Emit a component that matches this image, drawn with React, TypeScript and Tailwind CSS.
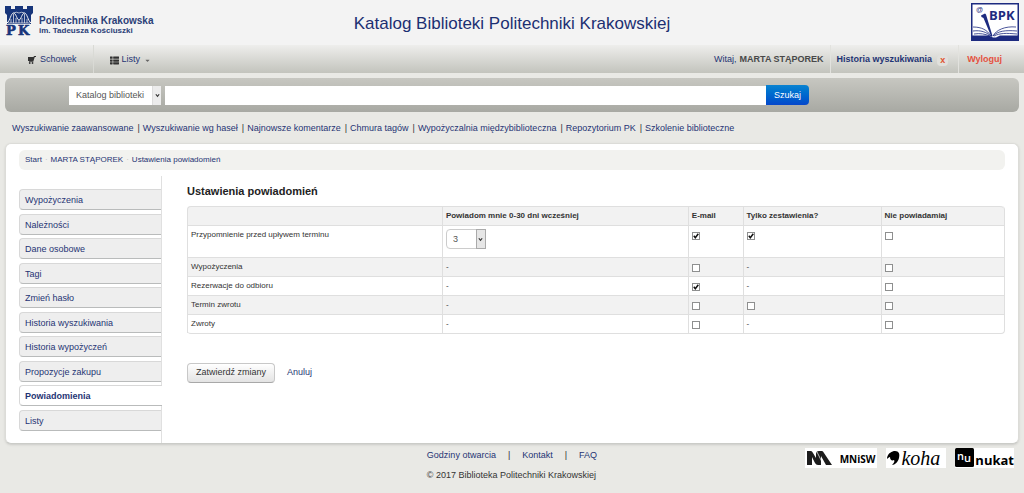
import { useState } from "react";
import { FaThList, FaCaretDown } from "react-icons/fa";

type Cell = boolean | null;

type NoticeRow = {
    name: string;
    days?: boolean;
    email: Cell;
    digest: Cell;
    none: Cell;
};

const searchLinks = [
    "Wyszukiwanie zaawansowane",
    "Wyszukiwanie wg haseł",
    "Najnowsze komentarze",
    "Chmura tagów",
    "Wypożyczalnia międzybiblioteczna",
    "Repozytorium PK",
    "Szkolenie biblioteczne",
];

const menu = [
    "Wypożyczenia",
    "Należności",
    "Dane osobowe",
    "Tagi",
    "Zmień hasło",
    "Historia wyszukiwania",
    "Historia wypożyczeń",
    "Propozycje zakupu",
    "Powiadomienia",
    "Listy",
];

// null means that the option is not available for this message
const notices: NoticeRow[] = [
    { name: "Przypomnienie przed upływem terminu", days: true, email: true, digest: true, none: false },
    { name: "Wypożyczenia", email: false, digest: null, none: false },
    { name: "Rezerwacje do odbioru", email: true, digest: null, none: false },
    { name: "Termin zwrotu", email: false, digest: false, none: false },
    { name: "Zwroty", email: false, digest: null, none: false },
];

const PkLogo = () => (
    <svg viewBox="0 0 28 30" className="h-[30px] w-7 overflow-visible" fill="#17357a" aria-hidden="true">
        <path d="M0 0h6v3h4V0h8v3h4V0h6v7l-2 2v9H2V9L0 7z" />
        <g stroke="#f3f3f3" fill="none" strokeWidth="1">
            <path d="M2 17C5 15 6 7 8.500 7S12 14 14 14s3-7 5.500-7S23 15 26 17" />
            <path d="M8.500 7q3-1.500 5.500 0 2.500-1.500 5.500 0M3 17h22M6 13v4M8.500 8v9M11 12v5M14 14v3M17 12v5M19.500 8v9M22 13v4" strokeWidth=".7" />
        </g>
        <text x="1" y="29" fontSize="13" fontWeight="700" stroke="#17357a" strokeWidth=".6" fontFamily="DejaVu Serif, serif">P</text>
        <text x="13" y="29" fontSize="13" fontWeight="700" stroke="#17357a" strokeWidth=".6" fontFamily="DejaVu Serif, serif">K</text>
    </svg>
);

const BpkLogo = () => (
    <svg viewBox="0 0 48 38" className="h-[38px] w-12" role="img" aria-label="BPK">
        <rect x=".75" y=".75" width="46.500" height="36.500" fill="#fff" stroke="#1d2b80" strokeWidth="1.500" />
        <path d="M1 32.500h17l4 2h3l4-2h18v4.500H1z" fill="#1d2b80" />
        <path d="M10 12.500l4-2 1 1 6.500 21.500-1 1-8-19-2-1z" fill="#1d2b80" />
        <g fill="none" stroke="#1d2b80" strokeWidth=".8">
            <path d="M2 24c9 0 14 3 18 9M2 28c8-1 13 1 18 5M3 31c6-1 11 0 16 2M22 33c3-6 12-10 23-9M22 33c5-5 12-6 24-5M23 33c6-3 12-3 23-2" />
        </g>
        <text x="5" y="9" fontSize="7" fill="#1d2b80" fontFamily="Liberation Sans, sans-serif">@</text>
        <text x="18" y="17" fontSize="13" fontWeight="700" fill="#1d2b80" fontFamily="Open Sans, sans-serif">BPK</text>
    </svg>
);

const CartIcon = () => (
    <svg viewBox="0 0 16 16" className="h-2 w-2" fill="#333" aria-hidden="true">
        <path d="M0 2h11l1-2h4v2h-2.500l-3 9.500H2V10H0z" />
        <circle cx="3.500" cy="14" r="1.800" />
        <circle cx="9" cy="14" r="1.800" />
    </svg>
);

const Chevron = () => (
    <svg viewBox="0 0 6 6" className="h-[5px] w-[5px]" fill="none" stroke="#333" strokeWidth="1.400" aria-hidden="true">
        <path d="M1 1.500l2 2.500 2-2.500" />
    </svg>
);

const Check = ({ label, value }: { label: string; value: Cell }) => {
    const [checked, setChecked] = useState(!!value);
    if (value === null) return <>-</>;
    return (
        <span className="grid w-2 pt-[3px]">
            <input
                type="checkbox"
                aria-label={label}
                checked={checked}
                onChange={(e) => setChecked(e.target.checked)}
                className="col-start-1 row-start-1 h-2 w-2 appearance-none border border-[#8e8f8f] bg-white"
            />
            {checked && (
                <svg viewBox="0 0 8 8" className="pointer-events-none col-start-1 row-start-1 h-2 w-2" fill="none" stroke="#111" strokeWidth="1.500" aria-hidden="true">
                    <path d="M1.800 3.800l1.500 1.900 3-4" />
                </svg>
            )}
        </span>
    );
};

const SiteHeader = () => (
    <header className="grid h-[45px] grid-cols-[1fr_auto_1fr] items-start bg-[#f3f3f3] px-[5px]">
        <a href="#" className="flex gap-[6px] pt-[6px] font-bold text-[#2b4077]">
            <PkLogo />
            <span className="pt-[9px]">
                <span className="block text-[10px] leading-[11px]">Politechnika Krakowska</span>
                <span className="block text-[8px] leading-[10px]">im. Tadeusza Kościuszki</span>
            </span>
        </a>
        <h1 className="pt-3 text-[17px] leading-6 text-[#1c2f72]">Katalog Biblioteki Politechniki Krakowskiej</h1>
        <a href="#" className="justify-self-end pt-[3px]">
            <BpkLogo />
        </a>
    </header>
);

const NavBar = () => (
    <nav className="flex h-7 items-stretch justify-between bg-linear-to-b from-[#eeeeec] to-[#c3c4bd]">
        <div className="flex">
            <a href="#" className="flex items-center gap-1 border-r border-[#d9dad5] pt-[2px] pr-4 pl-7">
                <CartIcon />
                Schowek
            </a>
            <button className="flex items-center gap-[3px] px-4 pt-[2px]">
                <FaThList className="text-[9px] text-[#333]" />
                Listy
                <FaCaretDown className="ml-px text-[7px] text-[#666]" />
            </button>
        </div>
        <div className="flex">
            <a href="#" className="flex items-center gap-[3px] border-r border-[#e2e2de] pt-[2px] pr-[6px]">
                Witaj, <b className="text-[#484848]">MARTA STĄPOREK</b>
            </a>
            <div className="flex items-center gap-[5px] border-r border-[#e2e2de] pt-[2px] pr-[10px] pl-[6px] font-bold">
                <a href="#">Historia wyszukiwania</a>
                <a href="#" className="rounded-sm bg-[#e0e0dc] px-[3px] leading-[11px] text-[#e0532f]">x</a>
            </div>
            <a href="#" className="flex items-center pt-[2px] pr-[22px] pl-2 font-bold text-[#e5513f]">Wyloguj</a>
        </div>
    </nav>
);

const SearchBar = () => (
    <form className="mx-[5px] mt-[5px] flex h-[34px] items-center rounded-md bg-linear-to-b from-[#c7c7c1] to-[#a8a9a3] pr-[210px] pl-16">
        <div className="mr-1 grid w-[92px] grid-cols-[1fr_9px] items-stretch">
            <select aria-label="Zakres" className="col-span-2 col-start-1 row-start-1 h-[19px] appearance-none bg-white pt-[2px] pl-[7px] text-[#555]">
                <option>Katalog biblioteki</option>
            </select>
            <span className="pointer-events-none col-start-2 row-start-1 flex items-center justify-center border-l border-[#ddd] bg-[#ececec]">
                <Chevron />
            </span>
        </div>
        <input aria-label="Szukaj" className="h-[19px] min-w-0 flex-1 bg-white px-1" />
        <button type="button" className="h-5 rounded-r-sm bg-linear-to-b from-[#0b83d0] to-[#0747cb] px-2 pt-px text-white">
            Szukaj
        </button>
    </form>
);

const Sidebar = () => (
    <aside className="w-[143px] shrink-0 border-r border-[#e0e0e0] pt-[13px] pb-3">
        <ul className="flex min-h-[242px] flex-col justify-between">
            {menu.map((item) => (
                <li key={item}>
                    <a
                        href="#"
                        className={`block h-[21px] rounded-l-sm border border-r-0 border-[#d8d8d8] border-b-[#b9bbbb] pl-[5px] leading-5 ${
                            item === "Powiadomienia" ? "-mr-px bg-white font-bold" : "bg-[#eeeeee]"
                        }`}
                    >
                        {item}
                    </a>
                </li>
            ))}
        </ul>
    </aside>
);

const cell = "border-t border-l border-[#dfdfdf] px-[3px] pt-[3px] align-top";

const NoticeTable = () => (
    <table className="w-full table-fixed border-separate border-spacing-0 rounded-sm border-r border-b border-[#dfdfdf] text-[8px] leading-3 text-[#333]">
        <colgroup>
            <col className="w-[31.2%]" />
            <col className="w-[30.1%]" />
            <col className="w-[6.7%]" />
            <col className="w-[16.9%]" />
            <col className="w-[15.1%]" />
        </colgroup>
        <thead>
            <tr className="h-[19px] bg-[#f2f2f2] text-left">
                <td className={`${cell} rounded-tl-sm`}></td>
                <th className={cell}>Powiadom mnie 0-30 dni wcześniej</th>
                <th className={cell}>E-mail</th>
                <th className={cell}>Tylko zestawienia?</th>
                <th className={`${cell} rounded-tr-sm`}>Nie powiadamiaj</th>
            </tr>
        </thead>
        <tbody>
            {notices.map((row) => (
                <tr key={row.name} className={`even:bg-[#f2f2f2] ${row.days ? "h-8" : "h-[19px]"}`}>
                    <td className={cell}>{row.name}</td>
                    <td className={cell}>
                        {row.days ? (
                            <div className="grid w-10 grid-cols-[1fr_10px]">
                                <select
                                    aria-label="Liczba dni"
                                    defaultValue="3"
                                    className="col-span-2 col-start-1 row-start-1 h-5 appearance-none rounded-sm border border-[#ccc] bg-white pl-[6px] text-[9px] text-[#555]"
                                >
                                    {Array.from({ length: 31 }, (_, i) => (
                                        <option key={i}>{i}</option>
                                    ))}
                                </select>
                                <span className="pointer-events-none col-start-2 row-start-1 flex items-center justify-center border border-[#aaa] bg-[#e6e6e6]">
                                    <Chevron />
                                </span>
                            </div>
                        ) : (
                            "-"
                        )}
                    </td>
                    <td className={cell}><Check label={`${row.name}: E-mail`} value={row.email} /></td>
                    <td className={cell}><Check label={`${row.name}: Tylko zestawienia`} value={row.digest} /></td>
                    <td className={cell}><Check label={`${row.name}: Nie powiadamiaj`} value={row.none} /></td>
                </tr>
            ))}
        </tbody>
    </table>
);

const Footer = () => (
    <footer className="grid grid-cols-[1fr_auto_1fr] items-start px-[10px] pt-1 pb-3">
        <div></div>
        <div className="pt-px">
            <div className="flex gap-3 leading-3">
                <a href="#">Godziny otwarcia</a>
                <span className="text-[#333]">|</span>
                <a href="#">Kontakt</a>
                <span className="text-[#333]">|</span>
                <a href="#">FAQ</a>
            </div>
            <p className="pt-2 leading-3 text-[#333]">© 2017 Biblioteka Politechniki Krakowskiej</p>
        </div>
        <div className="flex justify-end gap-[9px] text-black">
            <a href="#" className="flex h-5 items-center gap-2 bg-white px-[2px] text-black">
                <svg viewBox="0 0 25 14" className="h-[14px] w-[25px]" fill="#1c1c1c" aria-hidden="true">
                    <path d="M0 0h4q1 0 2 2l3 5V3q0-3 3-3h3q1 0 2 2l8 12h-6l-5-9v9h-3q-2 0-3-2L5 6v8H0z" />
                    <path d="M10 1l6 12" stroke="#fff" strokeWidth=".7" />
                </svg>
                <span className="pt-[3px] font-['Open_Sans'] text-[10px] font-bold">MNiSW</span>
            </a>
            <a href="#" className="flex h-5 items-center gap-px bg-white pr-[6px] text-black">
                <svg viewBox="0 0 14 16" className="h-4 w-[14px]" aria-hidden="true">
                    <path d="M1 8C2 3 6 1 9 1c4 0 5 3 4 7-1 4-4 7-7 7 2-2 3-4 2-5-2 1-4 0-4-3-1 0-2 1-3 2z" />
                </svg>
                <span className="font-['Liberation_Serif'] text-[20px] leading-5 italic">koha</span>
            </a>
            <a href="#" className="flex h-5 items-start bg-white text-black">
                <svg viewBox="0 0 19 19" className="h-[19px] w-[19px] overflow-visible" aria-hidden="true">
                    <rect width="19" height="19" rx="1.500" />
                    <text x="2" y="12" fontSize="11" fontWeight="600" fill="#fff" fontFamily="Open Sans, sans-serif">n</text>
                    <text x="9" y="14" fontSize="11" fontWeight="600" fill="#fff" fontFamily="Open Sans, sans-serif">u</text>
                </svg>
                <span className="pt-1 pl-px font-['Open_Sans'] text-[13px] leading-4 font-bold">nukat</span>
            </a>
        </div>
    </footer>
);

const App = () => {
    return (
        <div className="min-h-screen bg-[#e9e9e5] font-['Liberation_Sans',sans-serif] text-[9px] text-[#1f3474]">
            <SiteHeader />
            <NavBar />
            <SearchBar />
            <div className="flex flex-wrap gap-1 px-3 pt-[10px] pb-[9px] leading-3">
                {searchLinks.map((link, i) => (
                    <span key={link} className="flex gap-[3px]">
                        {i > 0 && <span className="text-[#333]">|</span>}
                        <a href="#">{link}</a>
                    </span>
                ))}
            </div>
            <div className="mx-[5px] rounded-md border border-[#dcdcd8] border-b-[#cbccc8] bg-white px-[13px] pt-[6px] shadow-sm">
                <nav className="flex h-5 items-center gap-[3px] rounded-md bg-[#f2f2ef] px-[6px] text-[8px]">
                    <a href="#">Start</a>
                    <span className="text-[#bbb]">·</span>
                    <a href="#">MARTA STĄPOREK</a>
                    <span className="text-[#bbb]">·</span>
                    <a href="#">Ustawienia powiadomień</a>
                </nav>
                <div className="flex pt-[6px]">
                    <Sidebar />
                    <main className="min-w-0 flex-1 pl-[25px]">
                        <h2 className="pt-2 pb-2 text-[11px] leading-[14px] font-bold text-[#222]">Ustawienia powiadomień</h2>
                        <NoticeTable />
                        <div className="flex items-center gap-3 pt-[29px]">
                            <button className="h-5 rounded-sm border border-[#c8c8c8] border-b-[#a8a8a8] bg-linear-to-b from-white to-[#e3e3e3] px-2 text-[#333]">
                                Zatwierdź zmiany
                            </button>
                            <a href="#">Anuluj</a>
                        </div>
                    </main>
                </div>
            </div>
            <Footer />
        </div>
    );
};

export default App;
